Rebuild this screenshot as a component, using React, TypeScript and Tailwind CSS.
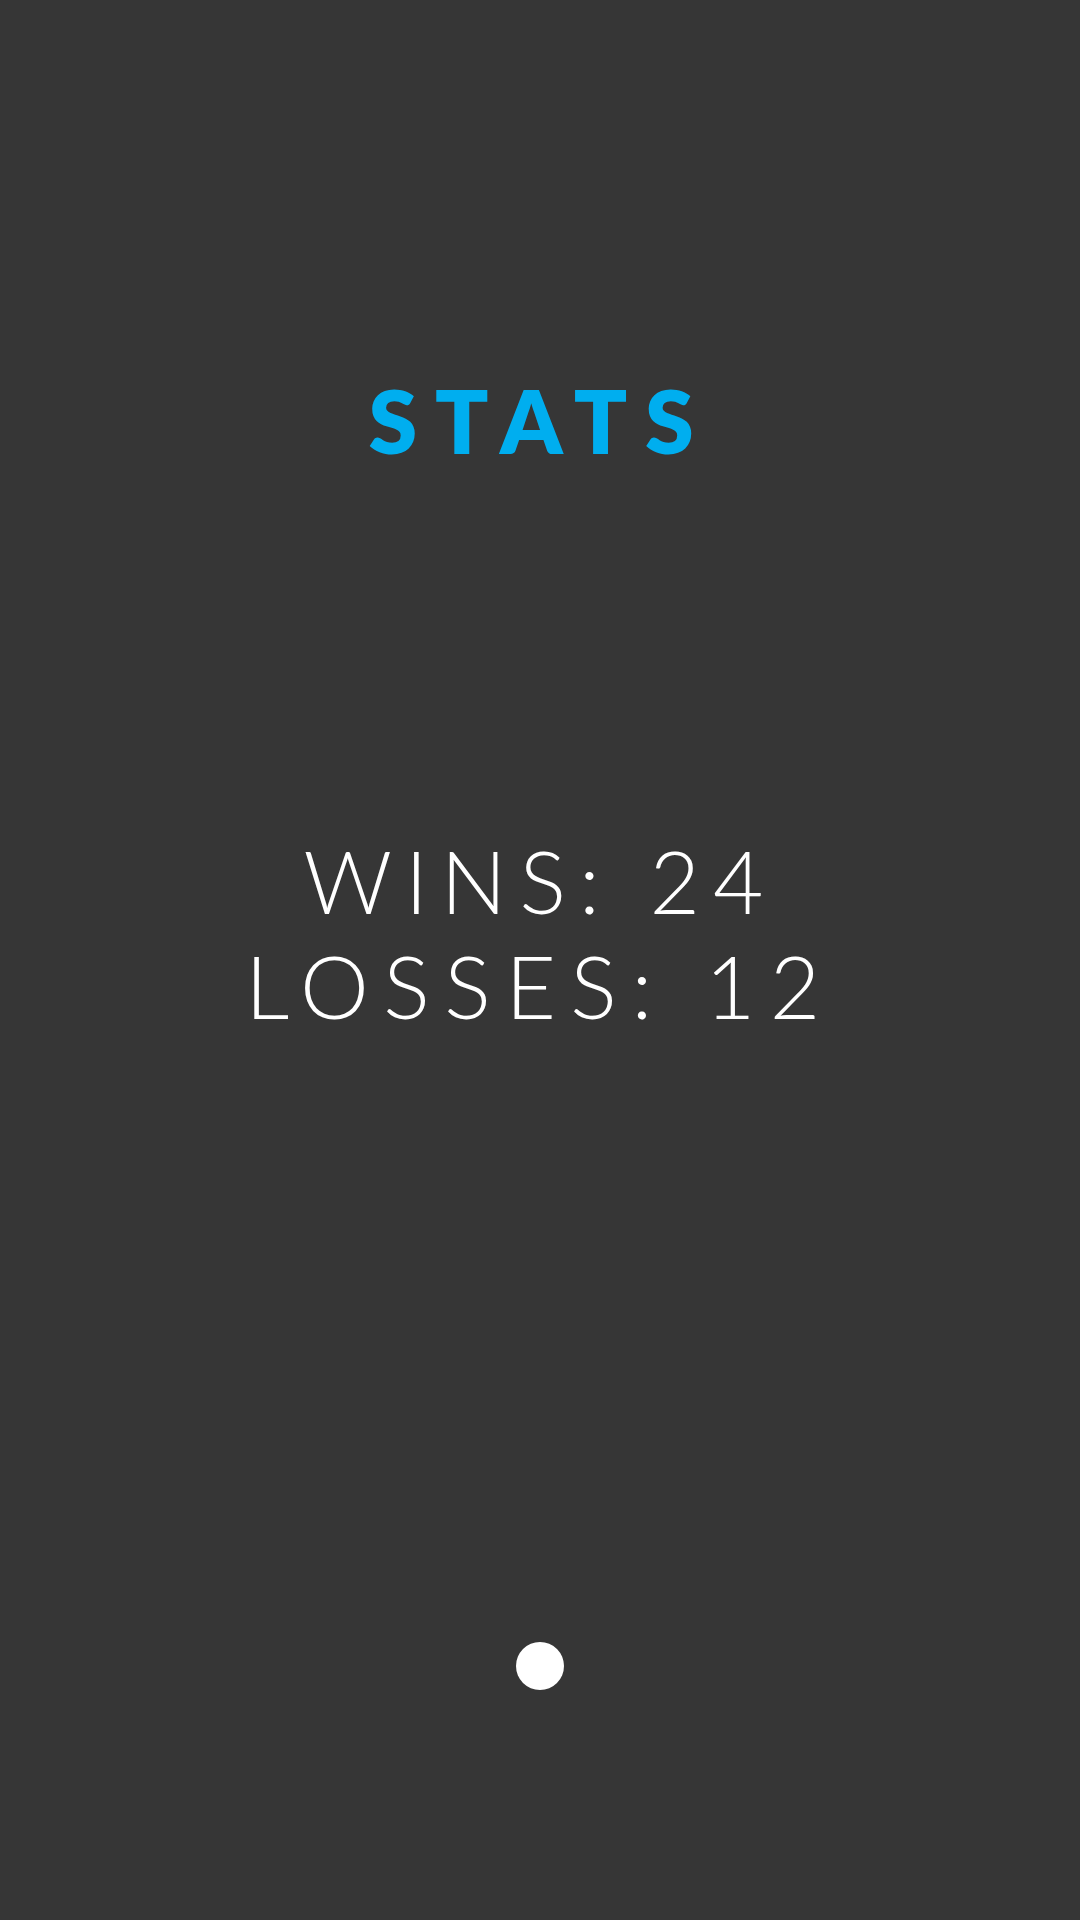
export default function App() {
  return (
    <div className="flex h-[1920px] w-full flex-col items-center bg-[#363636] font-['Lato',sans-serif]">
      <h1 className="mt-[370px] text-[88px] leading-[100px] font-extrabold tracking-[0.2em] text-[#00aeef]">
        STATS
      </h1>
      <div className="mt-[358px] flex flex-col items-center text-[87px] leading-[105px] font-light text-white">
        <p className="tracking-[13px]">WINS: 24</p>
        <p className="tracking-[14.5px]">LOSSES: 12</p>
      </div>
      <div className="mt-[604px] size-[48px] rounded-full bg-white" />
    </div>
  );
}
